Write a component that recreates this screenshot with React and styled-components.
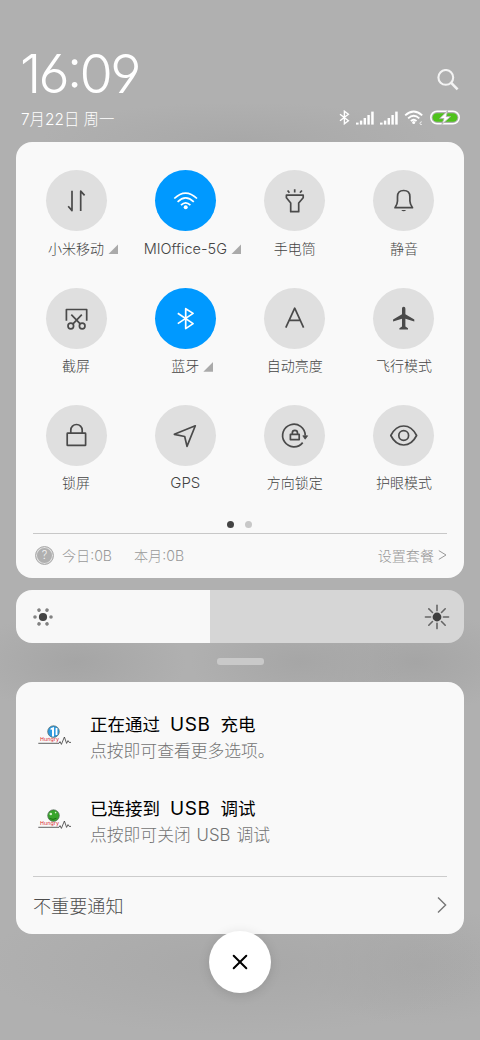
import React from "react";
import styled, { createGlobalStyle } from "styled-components";

const tiles = [
  { label: "小米移动", icon: "data", more: true },
  { label: "MIOffice-5G", icon: "wifi", more: true, active: true, size: "14.5px" },
  { label: "手电筒", icon: "torch" },
  { label: "静音", icon: "bell" },
  { label: "截屏", icon: "screenshot" },
  { label: "蓝牙", icon: "bluetooth", more: true, active: true },
  { label: "自动亮度", icon: "auto" },
  { label: "飞行模式", icon: "plane" },
  { label: "锁屏", icon: "lock" },
  { label: "GPS", icon: "gps", size: "15px" },
  { label: "方向锁定", icon: "rotation" },
  { label: "护眼模式", icon: "eye" },
];

const notifications = [
  {
    title: ["正在通过", "USB", "充电"],
    text: "点按即可查看更多选项。",
    color: "#2f9be0",
    usb: true,
  },
  {
    title: ["已连接到", "USB", "调试"],
    text: "点按即可关闭 USB 调试",
    color: "#38a52c",
  },
];

// every tile icon is drawn on the 61px circle
const icons = {
  data: (
    <>
      <path d="M26 20.7V40.6L22.2 36.3" />
      <path d="M34.7 41V21.2L38.6 25.4" />
    </>
  ),
  wifi: (
    <>
      <path d="M19.3 28.5Q30.5 17.7 42 28.5" />
      <path d="M22.6 31.9Q30.6 24 38.8 31.9" />
      <path d="M26 35.2Q30.6 30.4 35.4 35.2" />
      <circle cx="30.7" cy="37.2" r="2" fill="currentColor" stroke="none" />
    </>
  ),
  torch: (
    <>
      <path d="M22.4 25.2H39.2V27.8L34.7 33V41.7H26.7V33L22.4 27.8Z" />
      <path d="M23.6 20.5L25.4 22.8M30.7 19.2V22.6M37.9 20.5L36 22.8" />
    </>
  ),
  bell: (
    <>
      <path d="M22 37.7C23.8 35 24.5 33.6 24.5 31V26.7C24.5 22.8 27 20.5 30.7 20.5S36.9 22.8 36.9 26.7V31C36.9 33.6 37.6 35 39.5 37.7Z" />
      <path d="M28.2 40Q30.7 42.6 33.2 40Z" fill="currentColor" stroke="none" />
    </>
  ),
  screenshot: (
    <>
      <path d="M20.4 32.8V21.5H40.7V32.8" />
      <path d="M25.3 26.7L34.2 35.8M35.8 26.7L27 35.8" />
      <circle cx="24.8" cy="38" r="2.8" />
      <circle cx="36.2" cy="38" r="2.8" />
    </>
  ),
  bluetooth: (
    <path d="M22.8 25.2L38.1 35.6L30.7 40.6V20.7L38.1 25.4L22.8 35.6" />
  ),
  auto: <path d="M21.8 39.7L30.7 20.2L39.6 39.7M25 32.3H36.4" />,
  plane: (
    <path
      d="M30.7 18.8C31.8 18.8 32.4 19.7 32.4 21V26.2L41.3 31.4V33.4L32.4 30.7V38.6L35 40.2V41.5H26.4V40.2L29 38.6V30.7L20.1 33.4V31.4L29 26.2V21C29 19.7 29.6 18.8 30.7 18.8Z"
      fill="currentColor"
      stroke="none"
    />
  ),
  lock: (
    <>
      <rect x="21.2" y="28.2" width="18.4" height="12.2" rx="0.5" />
      <path d="M24.8 28V25.2A5.7 5.7 0 0 1 36.2 25.2V28" />
    </>
  ),
  gps: <path d="M40.3 20.8L19.3 29.3L29.7 31.5L32 41.4Z" />,
  rotation: (
    <>
      <path d="M41.2 30.5A11.3 11.3 0 1 0 38.7 37.6" />
      <path d="M38.8 30.8H43.6L41.2 34.2Z" fill="currentColor" strokeWidth="0.8" />
      <rect x="26.4" y="29.4" width="8.8" height="5.2" />
      <path d="M28.3 29V28A2.6 2.6 0 0 1 33.5 28V29" />
    </>
  ),
  eye: (
    <>
      <path d="M17.8 30.5C21 24.2 25.5 21 30.7 21S40.4 24.2 43.6 30.5C40.4 36.8 35.9 40 30.7 40S21 36.8 17.8 30.5Z" />
      <circle cx="30.7" cy="30.5" r="4.9" />
    </>
  ),
};

const SignalIcon = () => (
  <svg width="18" height="14" viewBox="0 0 18 14" fill="#fff">
    <rect x="0" y="11.6" width="2.6" height="2" />
    <rect x="3.9" y="9.6" width="2.4" height="4" />
    <rect x="7.6" y="7" width="2.4" height="6.6" />
    <rect x="11.4" y="4" width="2.4" height="9.6" />
    <rect x="15.2" y="0.6" width="2.5" height="13" />
  </svg>
);

const StatusIcons = () => (
  <Status>
    <svg width="11" height="15" viewBox="0 0 11 15" fill="none" stroke="#fff" strokeWidth="1.4">
      <path d="M1 4.2L9.4 10.8L5.4 13.8V1.2L9.4 4.2L1 10.8" />
    </svg>
    <SignalIcon />
    <SignalIcon />
    <svg width="20" height="15" viewBox="0 0 20 15" fill="none" stroke="#fff" strokeWidth="1.9">
      <path d="M1.2 5.4Q9.7 -2.4 18.2 5.4M4.1 8.4Q9.7 3.2 15.3 8.4M6.9 11.2Q9.7 8.4 12.5 11.2" />
      <circle cx="9.7" cy="12.5" r="1.5" fill="#fff" stroke="none" />
      <path d="M17.8 11.8Q16 11.8 16 13.4Q16 14.8 17.8 14.6" strokeWidth="0.8" />
    </svg>
    <svg width="30" height="15" viewBox="0 0 30 15">
      <rect x="0.8" y="1.3" width="28.4" height="12.4" rx="6.2" fill="none" stroke="#fff" strokeWidth="1.5" />
      <rect x="2.6" y="3.2" width="24.8" height="8.6" rx="4.3" fill="#4fc21c" />
      <path
        d="M17.6 0.8L9.6 8.6H14L11.8 14.4L20.6 6.6H16.2Z"
        fill="#fff"
        stroke="#b0b0b0"
        strokeWidth="0.9"
      />
    </svg>
  </Status>
);

const HungryLogo = ({ color, usb }) => (
  <svg width="34" height="22" viewBox="0 0 34 22">
    <circle cx="15.5" cy="6.6" r="5.8" fill={color} stroke="#55605a" strokeWidth="0.7" />
    {usb ? (
      <path d="M12.6 3.2L16 2V11.6H14V4.6L12.6 5ZM17.6 3H19.4V10H17.6Z" fill="#fff" />
    ) : (
      <>
        <circle cx="12.8" cy="5" r="1.3" fill="#d8f0d0" />
        <circle cx="17.6" cy="3.6" r="0.8" fill="#d8f0d0" />
        <path d="M11.5 9.4Q15 11.5 18.5 9.2" stroke="#1d7016" fill="none" />
      </>
    )}
    <LogoText x="2" y="16" textLength="19" lengthAdjust="spacingAndGlyphs">
      Hungry
    </LogoText>
    <path
      d="M0.3 18.3H21L22 16.6L23.4 19.4L26.4 12L28.6 18.4L30 15.6L31.2 17.4H33"
      fill="none"
      stroke="#3a3a3a"
      strokeWidth="0.8"
    />
  </svg>
);

const App = () => {
  return (
    <Screen>
      <GlobalStyle />
      <TopRow>
        <Time>16:09</Time>
        <svg width="22" height="22" viewBox="0 0 22 22" fill="none" stroke="#f3f3f3" strokeWidth="2.1">
          <circle cx="8.8" cy="8.4" r="7.4" />
          <path d="M14.2 13.8L20.6 20.3" strokeWidth="2.6" />
        </svg>
      </TopRow>
      <DateRow>
        <DateText>7月22日 周一</DateText>
        <StatusIcons />
      </DateRow>

      <Panel>
        <Tiles>
          {tiles.map((tile) => (
            <Tile key={tile.label}>
              <Circle $active={tile.active}>
                <svg
                  width="61"
                  height="61"
                  viewBox="0 0 61 61"
                  fill="none"
                  stroke="currentColor"
                  strokeWidth="1.7"
                  strokeLinejoin="round"
                >
                  {icons[tile.icon]}
                </svg>
              </Circle>
              <Label $size={tile.size}>
                {tile.label}
                {tile.more && <Corner />}
              </Label>
            </Tile>
          ))}
        </Tiles>
        <Dots>
          <Dot $active />
          <Dot />
        </Dots>
        <Usage>
          <Help>?</Help>
          <UsageText>今日:0B</UsageText>
          <UsageText>本月:0B</UsageText>
          <Plan>
            设置套餐
            <svg width="9" height="12" viewBox="0 0 9 12" fill="none" stroke="#999">
              <path d="M0.8 1.6L8 6L0.8 10.4" />
            </svg>
          </Plan>
        </Usage>
      </Panel>

      <Brightness>
        <Level />
        <Rest />
        <Low width="22" height="22" viewBox="0 0 22 22">
          <circle cx="11" cy="11" r="4.1" fill="#444" />
          {[0, 60, 120, 180, 240, 300].map((a) => (
            <circle key={a} cx="19" cy="11" r="1.8" fill="#828282" transform={`rotate(${a} 11 11)`} />
          ))}
        </Low>
        <High width="26" height="26" viewBox="0 0 26 26">
          <circle cx="13" cy="13" r="4.4" fill="#3e3e3e" />
          {[0, 45, 90, 135, 180, 225, 270, 315].map((a) => (
            <path
              key={a}
              d="M19.4 13H24.6"
              stroke="#666"
              strokeWidth="1.6"
              strokeLinecap="round"
              transform={`rotate(${a} 13 13)`}
            />
          ))}
        </High>
      </Brightness>
      <Handle />

      <Notifications>
        {notifications.map((item) => (
          <Notification key={item.text}>
            <HungryLogo color={item.color} usb={item.usb} />
            <Message>
              <Title>
                {item.title.map((word) => (
                  <Word key={word} $latin={word === "USB"}>
                    {word}
                  </Word>
                ))}
              </Title>
              <Text>{item.text}</Text>
            </Message>
          </Notification>
        ))}
        <Unimportant>
          不重要通知
          <svg width="10" height="18" viewBox="0 0 10 18" fill="none" stroke="#777" strokeWidth="1.4">
            <path d="M1 1.6L8.6 9L1 16.4" />
          </svg>
        </Unimportant>
      </Notifications>

      <Close>
        <svg width="16" height="16" viewBox="0 0 16 16" stroke="#000" strokeWidth="2" strokeLinecap="round">
          <path d="M1.7 1.7L14.3 14.3M14.3 1.7L1.7 14.3" />
        </svg>
      </Close>
    </Screen>
  );
};

export default App;

const GlobalStyle = createGlobalStyle`
  * {
    box-sizing: border-box;
  }

  body {
    margin: 0;
    font-family: Inter, "Noto Sans CJK SC", sans-serif;
    font-weight: 300;
  }

  svg {
    display: block;
    flex-shrink: 0;
  }
`;

const Screen = styled.div`
  width: 480px;
  height: 1040px;
  padding: 48px 16px 0;
  overflow: hidden;
  background:
    radial-gradient(ellipse 110px 50px at 76px 662px, #a5a5a5 0%, transparent 100%),
    radial-gradient(ellipse 110px 50px at 300px 662px, #a6a6a6 0%, transparent 100%),
    radial-gradient(ellipse 110px 50px at 415px 662px, #a5a5a5 0%, transparent 100%),
    radial-gradient(ellipse 260px 70px at 240px 965px, #a8a8a8 0%, transparent 100%),
    radial-gradient(ellipse 120px 60px at 420px 965px, #a8a8a8 0%, transparent 100%),
    radial-gradient(ellipse 200px 40px at 240px 142px, #a8a8a8 0%, transparent 100%),
    #b0b0b0;
`;

const TopRow = styled.div`
  display: flex;
  justify-content: space-between;
  height: 58px;
  padding: 0 5px 0 4px;

  svg {
    margin-top: 21px;
  }
`;

const Time = styled.div`
  color: #fff;
  font-size: 54px;
  line-height: 52px;
  letter-spacing: -2.7px;
  font-feature-settings: "cv03", "cv04", "case";
`;

const DateRow = styled.div`
  display: flex;
  align-items: center;
  justify-content: space-between;
  height: 23px;
  padding: 0 4px 0 5px;
`;

const DateText = styled.div`
  color: #fff;
  font-size: 15.4px;
  white-space: nowrap;
`;

const Status = styled.div`
  display: flex;
  align-items: center;
  gap: 6px;
`;

const Panel = styled.div`
  height: 435.5px;
  margin-top: 13px;
  border-radius: 16px;
  background: #f9f9f9;
`;

const Tiles = styled.div`
  display: grid;
  grid-template-columns: repeat(4, 109.33px);
  grid-auto-rows: 117.3px;
  justify-content: center;
  padding-top: 28.3px;
`;

const Tile = styled.div`
  display: flex;
  flex-direction: column;
  align-items: center;
`;

const Circle = styled.div`
  width: 61px;
  height: 61px;
  border-radius: 50%;
  color: ${({ $active }) => ($active ? "#fff" : "#4a4a4a")};
  background: ${({ $active }) => ($active ? "#0099ff" : "#dfdfdf")};
`;

const Label = styled.div`
  display: flex;
  align-items: center;
  margin-top: 7.6px;
  color: #444;
  font-size: ${({ $size }) => $size || "14px"};
  line-height: 20px;
  white-space: nowrap;
`;

const Corner = styled.div`
  width: 10px;
  height: 10px;
  margin: 1px -14px 0 4px;
  background: #aaa;
  clip-path: polygon(100% 0, 100% 100%, 0 100%);
`;

const Dots = styled.div`
  display: flex;
  justify-content: center;
  gap: 11px;
  margin: -1.3px 1px 0 0;
`;

const Dot = styled.div`
  width: 7px;
  height: 7px;
  border-radius: 50%;
  background: ${({ $active }) => ($active ? "#444" : "#c8c8c8")};
`;

const Usage = styled.div`
  display: flex;
  align-items: center;
  height: 44px;
  margin: 5px 17px 0;
  padding-left: 2px;
  border-top: 1px solid #c8c8c8;
  color: #999;
  font-size: 14.1px;
`;

const Help = styled.div`
  width: 19px;
  height: 19px;
  margin-right: 8px;
  border: 1px solid #b0b0b0;
  border-radius: 50%;
  box-shadow: inset 0 0 0 1px #e2e2e2;
  background: #b0b0b0;
  color: #f4f4f4;
  font-size: 11px;
  line-height: 17px;
  text-align: center;
`;

const UsageText = styled.div`
  margin: -1px 22px 0 0;
`;

const Plan = styled.div`
  display: flex;
  align-items: center;
  gap: 4px;
  margin: -1px 0 0 auto;
`;

const Brightness = styled.div`
  position: relative;
  display: flex;
  height: 53px;
  margin-top: 12.5px;
  border-radius: 16px;
  overflow: hidden;
`;

const Level = styled.div`
  width: 194px;
  background: #f8f8f8;
`;

const Rest = styled.div`
  flex: 1;
  background: #d6d6d6;
`;

const Low = styled.svg`
  position: absolute;
  left: 15.6px;
  top: 16px;
`;

const High = styled.svg`
  position: absolute;
  right: 13.7px;
  top: 14px;
`;

const Handle = styled.div`
  width: 47px;
  height: 7px;
  margin: 15px auto 0;
  border-radius: 3px;
  background: #c9c9c9;
`;

const Notifications = styled.div`
  height: 252px;
  margin-top: 17px;
  padding: 26px 17px 0;
  border-radius: 16px;
  background: #f9f9f9;
`;

const Notification = styled.div`
  display: flex;
  align-items: center;
  gap: 18px;
  height: 84px;
  padding: 0 0 28px 5px;
`;

const LogoText = styled.text`
  fill: #d8232a;
  font-family: "DejaVu Sans", sans-serif;
  font-size: 5.6px;
  font-weight: 400;
`;

const Message = styled.div`
  margin-top: 3px;
`;

const Title = styled.div`
  display: flex;
  gap: 10px;
  color: #000;
  font-weight: 400;
  line-height: 27px;
`;

const Word = styled.span`
  font-size: ${({ $latin }) => ($latin ? "19px" : "17.5px")};
  letter-spacing: ${({ $latin }) => ($latin ? "0.6px" : "0")};
`;

const Text = styled.div`
  color: #737373;
  font-size: 16.8px;
  line-height: 27px;
  word-spacing: 1.2px;
  white-space: nowrap;
`;

const Unimportant = styled.div`
  display: flex;
  align-items: center;
  justify-content: space-between;
  height: 56px;
  border-top: 1px solid #ccc;
  color: #4d4d4d;
  font-size: 18.1px;
`;

const Close = styled.div`
  position: relative;
  display: flex;
  align-items: center;
  justify-content: center;
  width: 62px;
  height: 62px;
  margin: -3px auto 0;
  border-radius: 50%;
  background: #fff;
  box-shadow: 0 2px 12px rgba(0, 0, 0, 0.12);
`;
